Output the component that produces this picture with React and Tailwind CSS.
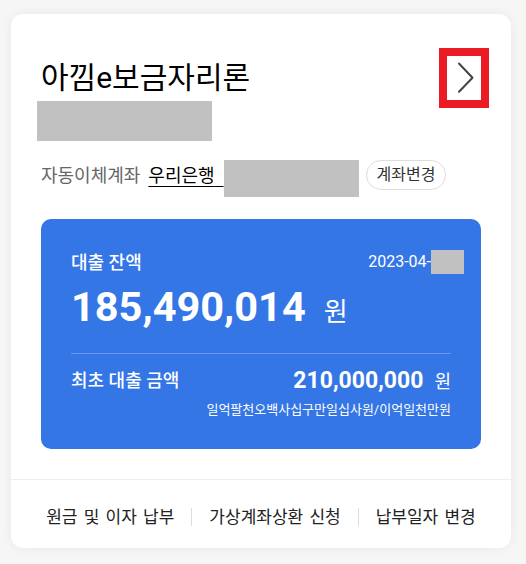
import React from 'react';

const font = "font-['Roboto','Noto_Sans_CJK_KR',sans-serif]";

const Chevron = () => (
  <svg width="34" height="44" viewBox="0 0 34 44" fill="none">
    <polyline points="12,7.5 25.5,21.7 12,35.8" stroke="#444" strokeWidth="2" strokeLinecap="round" strokeLinejoin="round" />
  </svg>
);

const FooterLink = ({ children }) => (
  <button className="text-[17px] leading-[24px] text-[#222] whitespace-nowrap [word-spacing:2px]">{children}</button>
);

const Divider = () => <span className="mx-[17px] h-[18px] w-px bg-[#ddd]" />;

export default function App() {
  return (
    <div className={`min-h-[564px] bg-[#f6f6f6] pt-[14px] pl-[11px] ${font}`}>
      <div className="w-[500px] rounded-[12px] bg-white shadow-[0_0_12px_rgba(0,0,0,0.06)]">
        <div className="px-[30px] pt-[42px]">
          {/* Header */}
          <div className="flex items-center justify-between">
            <h1 className="text-[30px] leading-[36px] font-normal text-black">아낌e보금자리론</h1>
            <button className="flex h-[44px] w-[34px] items-center justify-center outline-8 outline-[#ec1c24]">
              <Chevron />
            </button>
          </div>
          <div className="mt-px -ml-[4px] h-[40px] w-[175px] bg-[#c1c1c1]" />

          {/* Auto transfer account */}
          <div className="mt-[19px] flex items-start">
            <span className="h-[30px] text-[18px] leading-[32px] text-[#666]">자동이체계좌</span>
            <span className="ml-[8px] h-[30px] text-[18px] leading-[32px] text-black underline underline-offset-[4px]">
              우리은행{'\u00a0\u00a0'}
            </span>
            <div className="h-[37px] w-[135px] bg-[#c1c1c1]" />
            <button className="ml-[7px] h-[30px] rounded-full border border-[#ddd] px-[10px] text-[16px] leading-[28px] text-[#333]">
              계좌변경
            </button>
          </div>

          {/* Balance card */}
          <div className="mt-[22px] rounded-[10px] bg-[#3476e5] px-[30px] pt-[31px] pb-[30px] text-white">
            <div className="flex h-[24px] items-center justify-between">
              <span className="text-[18px] font-medium">대출 잔액</span>
              <div className="-mr-[13px] flex items-center">
                <span className="text-[16px] leading-none">2023-04-</span>
                <div className="h-[24px] w-[33px] bg-[#c1c1c1]" />
              </div>
            </div>
            <div className="mt-[12px] flex items-baseline">
              <span className="text-[41.5px] leading-none font-bold">185,490,014</span>
              <span className="ml-[18px] text-[26px] leading-none">원</span>
            </div>
            <div className="mt-[25px] h-px bg-white/25" />
            <div className="mt-[15px] flex items-center justify-between">
              <span className="text-[18px] font-medium leading-[24px]">최초 대출 금액</span>
              <div className="flex items-baseline">
                <span className="text-[23px] leading-none font-bold">210,000,000</span>
                <span className="ml-[11px] text-[18px] leading-none">원</span>
              </div>
            </div>
            <div className="mt-[8px] text-right text-[13px] leading-[18px]">
              일억팔천오백사십구만일십사원/이억일천만원
            </div>
          </div>
        </div>

        {/* Footer */}
        <div className="mt-[30px] flex items-center justify-center border-t border-[#eee] pt-[25px] pb-[19px]">
          <FooterLink>원금 및 이자 납부</FooterLink>
          <Divider />
          <FooterLink>가상계좌상환 신청</FooterLink>
          <Divider />
          <FooterLink>납부일자 변경</FooterLink>
        </div>
      </div>
    </div>
  );
}
